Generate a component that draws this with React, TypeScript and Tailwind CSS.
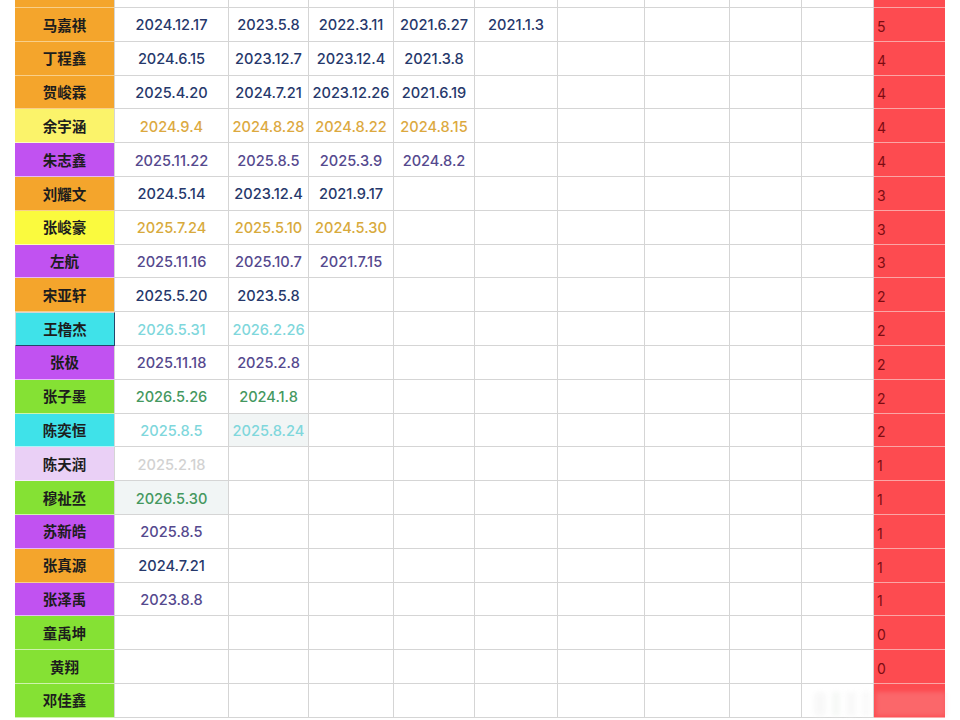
type Tone = 'orange' | 'yellowL' | 'yellow' | 'purple' | 'cyan' | 'lavender' | 'green'

const NAME_BG: Record<Tone, string> = {
  orange: 'bg-[#f4a52c]',
  yellowL: 'bg-[#fbf36a]',
  yellow: 'bg-[#fafa3e]',
  purple: 'bg-[#c152f1]',
  cyan: 'bg-[#3fe2e9]',
  lavender: 'bg-[#ead0f6]',
  green: 'bg-[#85e134]',
}

const DATE_TEXT: Record<Tone, string> = {
  orange: 'text-[#26386b]',
  yellowL: 'text-[#dca93f]',
  yellow: 'text-[#d8aa3c]',
  purple: 'text-[#55498e]',
  cyan: 'text-[#7fd7dc]',
  lavender: 'text-[#d2d2d2]',
  green: 'text-[#45985f]',
}

type Row = { name: string; tone: Tone; dates: string[]; count: string; shade?: number[]; selected?: boolean }

const rows: Row[] = [
  { name: '马嘉祺', tone: 'orange', dates: ['2024.12.17', '2023.5.8', '2022.3.11', '2021.6.27', '2021.1.3'], count: '5' },
  { name: '丁程鑫', tone: 'orange', dates: ['2024.6.15', '2023.12.7', '2023.12.4', '2021.3.8'], count: '4' },
  { name: '贺峻霖', tone: 'orange', dates: ['2025.4.20', '2024.7.21', '2023.12.26', '2021.6.19'], count: '4' },
  { name: '余宇涵', tone: 'yellowL', dates: ['2024.9.4', '2024.8.28', '2024.8.22', '2024.8.15'], count: '4' },
  { name: '朱志鑫', tone: 'purple', dates: ['2025.11.22', '2025.8.5', '2025.3.9', '2024.8.2'], count: '4' },
  { name: '刘耀文', tone: 'orange', dates: ['2024.5.14', '2023.12.4', '2021.9.17'], count: '3' },
  { name: '张峻豪', tone: 'yellow', dates: ['2025.7.24', '2025.5.10', '2024.5.30'], count: '3' },
  { name: '左航', tone: 'purple', dates: ['2025.11.16', '2025.10.7', '2021.7.15'], count: '3' },
  { name: '宋亚轩', tone: 'orange', dates: ['2025.5.20', '2023.5.8'], count: '2' },
  { name: '王橹杰', tone: 'cyan', dates: ['2026.5.31', '2026.2.26'], count: '2', selected: true },
  { name: '张极', tone: 'purple', dates: ['2025.11.18', '2025.2.8'], count: '2' },
  { name: '张子墨', tone: 'green', dates: ['2026.5.26', '2024.1.8'], count: '2' },
  { name: '陈奕恒', tone: 'cyan', dates: ['2025.8.5', '2025.8.24'], count: '2', shade: [1] },
  { name: '陈天润', tone: 'lavender', dates: ['2025.2.18'], count: '1' },
  { name: '穆祉丞', tone: 'green', dates: ['2026.5.30'], count: '1', shade: [0] },
  { name: '苏新皓', tone: 'purple', dates: ['2025.8.5'], count: '1' },
  { name: '张真源', tone: 'orange', dates: ['2024.7.21'], count: '1' },
  { name: '张泽禹', tone: 'purple', dates: ['2023.8.8'], count: '1' },
  { name: '童禹坤', tone: 'green', dates: [], count: '0' },
  { name: '黄翔', tone: 'green', dates: [], count: '0' },
  { name: '邓佳鑫', tone: 'green', dates: [], count: '' },
]

const DATE_COLS = 9

function DateCell({ value, tone, shaded }: { value?: string; tone: Tone; shaded?: boolean }) {
  return (
    <div
      className={`flex h-[33.8px] items-center justify-center whitespace-nowrap border-r border-b border-[#d5d5d5] pt-[4px] text-[14.6px] font-medium ${DATE_TEXT[tone]} ${shaded ? 'bg-[#f1f5f5]' : 'bg-white'}`}
    >
      {value}
    </div>
  )
}

export default function App() {
  return (
    <div className="relative h-[720px] w-[960px] overflow-hidden bg-white pl-[15px] font-['Inter','Noto_Sans_CJK_SC',sans-serif]">
      <div className="grid w-[930px] grid-cols-[100px_114px_80px_85px_81px_83px_87px_85px_72px_72px_71px]">
        {/* partial row cut off at the top */}
        <div className="h-[8px] border-r border-b border-[#d5d5d5] border-b-[#f8cf8a] bg-[#f4a52c]" />
        {Array.from({ length: DATE_COLS }).map((_, i) => (
          <div key={i} className="h-[8px] border-r border-b border-[#d5d5d5] bg-white" />
        ))}
        <div className="h-[8px] border-b border-[#fba5a5] bg-[#fd4b50]" />

        {rows.map(r => (
          <div key={r.name} className="contents">
            <div
              className={`flex h-[33.8px] items-center justify-center border-r border-b border-[#d5d5d5] pt-[2px] text-[14.5px] font-semibold text-[#1d1d1d] ${NAME_BG[r.tone]} ${r.selected ? 'border-l border-t border-[#24466b] border-r-[#24466b] border-b-[#24466b]' : r.tone === 'orange' ? 'border-b-[#f8cf8a]' : 'border-b-white/60'}`}
            >
              {r.name}
            </div>
            {Array.from({ length: DATE_COLS }).map((_, i) => (
              <DateCell key={i} value={r.dates[i]} tone={r.tone} shaded={r.shade?.includes(i)} />
            ))}
            <div className="flex h-[33.8px] items-center border-b border-[#fba5a5] bg-[#fd4b50] pt-[4px] pl-[3px] text-[14px] text-[#7d0c12]">
              {r.count}
            </div>
          </div>
        ))}
      </div>

      {/* faint watermark over the bottom right */}
      <div className="pointer-events-none absolute bottom-[4px] right-[14px] flex items-center gap-[6px] opacity-50 blur-[2px]">
        <div className="h-[24px] w-[12px] rounded-sm bg-[#f2f2f2]" />
        <div className="h-[24px] w-[8px] bg-[#eef2ee]" />
        <div className="h-[24px] w-[10px] bg-[#f3f3f3]" />
        <div className="h-[24px] w-[8px] bg-[#f5f5f5]" />
        <div className="h-[24px] w-[70px] bg-[#f4b9ba]/50" />
      </div>
    </div>
  )
}
